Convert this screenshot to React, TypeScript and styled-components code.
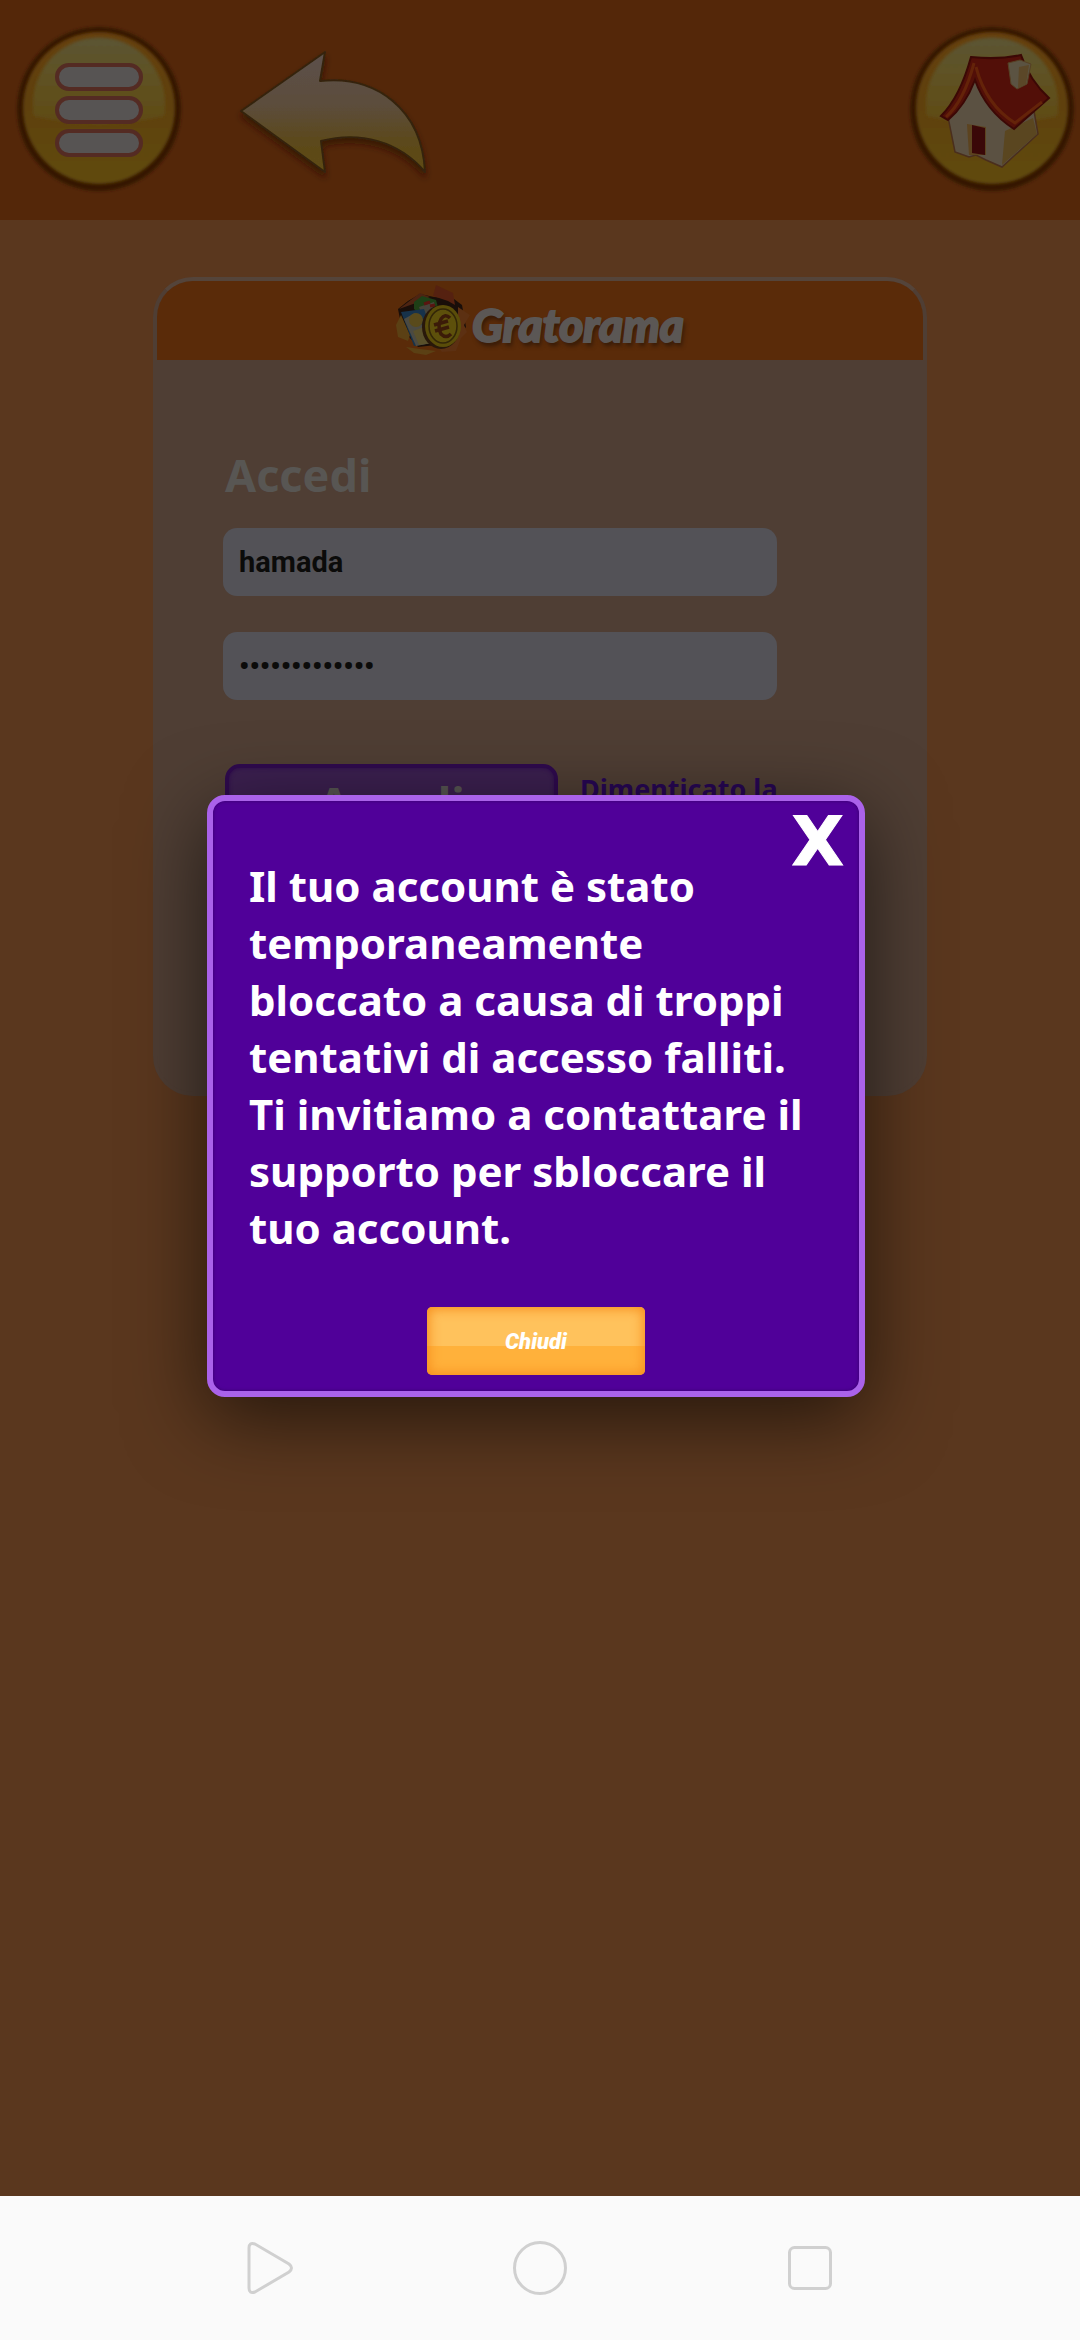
import React from "react";
import styled, { createGlobalStyle } from "styled-components";

const Global = createGlobalStyle`
  *, *::before, *::after { box-sizing: border-box; }
  body { margin: 0; background: #5a371e; font-family: "Noto Sans", "Open Sans", sans-serif; }
  button { border: 0; padding: 0; background: none; font: inherit; cursor: pointer; }
  svg { display: block; overflow: visible; }
`;

const Screen = styled.div`
  min-height: 100vh;
  display: flex;
  flex-direction: column;
`;

const Page = styled.div`
  position: relative;
  flex: 1;
`;

const TopBar = styled.header`
  height: 220px;
  padding: 0 6px 0 17px;
  display: flex;
  align-items: center;
  gap: 52px;
  background: #542709;
`;

const IconButton = styled.button<{ $end?: boolean }>`
  margin-left: ${(p) => (p.$end ? "auto" : "0")};
`;

const Card = styled.main`
  width: calc(100% - 306px);
  margin: 57px auto 0;
  height: 819px;
  border: 4px solid #54443a;
  border-color: #54443a #4f3e34 #4f3e34;
  border-radius: 40px;
  overflow: hidden;
  background: #4f3e34;
`;

const CardHead = styled.div`
  height: 79px;
  padding-top: 4px;
  display: flex;
  justify-content: center;
  background: #5a2b09;
`;

const Brand = styled.span`
  padding-top: 8px;
  font: italic 900 46px/64px "Lato", "Noto Sans", sans-serif;
  color: #5b5755;
  -webkit-text-stroke: 2px #5b5755;
  text-shadow: 2px 4px 4px #351a08;
`;

const Form = styled.form`
  padding: 83px 66px 0;
`;

const Title = styled.h1`
  margin: 0 0 21px;
  padding-left: 2px;
  font-size: 45px;
  line-height: 64px;
  color: #585653;
`;

const Field = styled.input`
  display: block;
  width: calc(100% - 80px);
  height: 68px;
  margin-bottom: 36px;
  padding: 0 16px;
  border: 0;
  border-radius: 14px;
  outline: 0;
  background: #535257;
  color: #0b0b0a;
  font: 700 29px "Roboto", sans-serif;
`;

const Actions = styled.div`
  display: flex;
  gap: 22px;
  padding: 28px 0 0 2px;
`;

const Submit = styled.button`
  flex: 0 0 333px;
  height: 78px;
  border: 4px solid #2f0a4e;
  border-radius: 15px;
  background: #3c2050;
  box-shadow: inset 0 0 4px #2f0a4e;
  color: #585653;
  font-weight: 700;
  font-size: 45px;
  line-height: 70px;
`;

const Forgot = styled.a`
  max-width: 240px;
  color: #270654;
  font-weight: 700;
  font-size: 27px;
  line-height: 36px;
  padding-top: 7px;
  text-decoration: none;
`;

const Overlay = styled.div`
  position: absolute;
  inset: 0;
  display: flex;
  align-items: center;
  justify-content: center;
  padding: 0 8px 4px 0;
`;

const Dialog = styled.section`
  width: 658px;
  max-width: 90%;
  padding: 26px 36px 16px;
  display: flex;
  flex-direction: column;
  border: 6px solid #aa62ea;
  border-radius: 18px;
  background: #500099;
  box-shadow: inset 0 0 3px 1px #41007d, 0 20px 80px rgba(0, 0, 0, 0.6);
`;

const Close = styled.button`
  align-self: flex-end;
  height: 30px;
  margin-right: -21px;
  color: #fff;
  font: 700 68px/30px "DejaVu Sans", sans-serif;
  -webkit-text-stroke: 1px #fff;
`;

const Message = styled.p`
  margin: 0 0 51px;
  color: #fff;
  font-weight: 700;
  font-size: 42px;
  line-height: 57px;
`;

const Confirm = styled.button`
  align-self: center;
  width: 218px;
  height: 68px;
  border-radius: 5px;
  background: linear-gradient(#ffc25c 0 57%, #ffb13b 57%);
  box-shadow: inset 0 0 12px 2px #f78f1e;
  color: #fff;
  font: italic 900 22px "Roboto", sans-serif;
`;

const SystemNav = styled.nav`
  height: 144px;
  padding: 0 12.5%;
  display: grid;
  grid-template-columns: repeat(3, 1fr);
  align-items: center;
  justify-items: center;
  background: #fafafa;
`;

const Disc = ({ id }: { id: string }) => (
  <>
    <defs>
      <linearGradient id={`${id}b`} x1="0" y1="0" x2="0" y2="1">
        <stop offset="0" stopColor="#664009" />
        <stop offset="0.5" stopColor="#5e410f" />
        <stop offset="1" stopColor="#604a0d" />
      </linearGradient>
      <linearGradient id={`${id}g`} x1="0" y1="0" x2="0" y2="1">
        <stop offset="0" stopColor="#5b5433" />
        <stop offset="0.6" stopColor="#5f501e" />
        <stop offset="1" stopColor="#5f4b14" />
      </linearGradient>
      <filter id={`${id}f`} x="-10%" y="-10%" width="120%" height="120%">
        <feGaussianBlur stdDeviation="1.5" />
      </filter>
    </defs>
    <circle cx="82" cy="84" r="82" fill="#351606" filter={`url(#${id}f)`} />
    <circle cx="82" cy="83" r="76" fill={`url(#${id}b)`} filter={`url(#${id}f)`} />
    <path d="M17 91 A66 67 0 1 1 147 91 Q82 106 17 91Z" fill={`url(#${id}g)`} filter={`url(#${id}f)`} />
  </>
);

const MenuIcon = () => (
  <svg width="168" height="170" viewBox="0 0 168 170" aria-hidden="true">
    <Disc id="m" />
    {[52, 85, 118].map((y) => (
      <rect key={y} x="40" y={y - 12} width="84" height="24" rx="12" fill="#575453" stroke="#542b23" strokeWidth="4" />
    ))}
  </svg>
);

const BackIcon = () => (
  <svg width="192" height="126" viewBox="0 0 192 126" aria-hidden="true">
    <defs>
      <linearGradient id="arrow" x1="0" y1="0" x2="0" y2="1">
        <stop offset="0" stopColor="#5b504b" />
        <stop offset="0.45" stopColor="#5b4d3b" />
        <stop offset="0.75" stopColor="#5c491b" />
        <stop offset="1" stopColor="#5e4b12" />
      </linearGradient>
      <filter id="soft" x="-10%" y="-10%" width="120%" height="130%">
        <feDropShadow dx="0" dy="5" stdDeviation="3" floodColor="#2e1504" floodOpacity="0.7" />
      </filter>
    </defs>
    <path
      d="M4 64 L88 5 L83 34 C139 28 185 62 188 125 C162 94 123 84 84 94 L88 125Z"
      fill="url(#arrow)"
      stroke="#35240b"
      strokeWidth="2"
      strokeLinejoin="round"
      filter="url(#soft)"
    />
  </svg>
);

const HomeIcon = () => (
  <svg width="164" height="170" viewBox="0 0 164 170" aria-hidden="true">
    <Disc id="h" />
    <path d="M38 92 L64 53 L100 100 L124 86 L128 109 L92 142 L76 135 L66 130 L59 132 L45 127Z" fill="#5b5142" stroke="#4a2e1d" strokeWidth="1.5" />
    <path d="M95 106 L123 93 L127 109 L92 140Z" fill="#5a4620" />
    <path d="M57 99 L76 102 L76 130 L59 130Z" fill="#5c431f" />
    <path d="M62 100 L75 103 L75 130 L62 128Z" fill="#3a0808" />
    <path d="M61 32 Q88 35 111 30 Q120 56 139 73 L104 104 Q76 86 65 55 Q55 81 38 95 L31 91 Q50 72 61 32Z" fill="#520f08" stroke="#3b0805" strokeWidth="2" />
    <path d="M64 38 Q54 76 36 92 M66 42 Q76 80 105 98 L132 77" fill="none" stroke="#642309" strokeWidth="3" />
    <path d="M98 38 L110 35 L121 39 L117 59 L107 64 L101 59Z" fill="#5b5342" stroke="#564023" strokeWidth="1" />
    <path d="M109 42 L119 40 L116 59 L108 63Z" fill="#5b4728" />
  </svg>
);

const CoinLogo = () => (
  <svg width="76" height="70" viewBox="0 0 76 70" aria-hidden="true">
    <path d="M2 24 L12 16 L24 9 L38 12 L58 14 L66 20 L70 42 L58 58 L22 62 L6 44Z" fill="#190e09" />
    <path d="M3 24 L24 8 L34 12 L20 18Z" fill="#4d2412" />
    <path d="M37 11 L40 0 L57 8 L59 20 L52 16Z" fill="#552110" />
    <path d="M62 22 L74 30 L68 40 L71 47 L65 53 L60 66 L46 67 L40 60 L62 52Z" fill="#5c3012" />
    <path d="M5 30 L0 40 L2 52 L12 56 L14 50Z" fill="#5b4014" />
    <path d="M10 62 L24 64 L40 66 L30 70 L18 68Z" fill="#5b4014" />
    <path d="M18 24 L18 17 L26 11 L40 15 L42 22 L30 34Z" fill="#1e3f16" />
    <path d="M23 22 L38 17 L40 26 L26 30Z" fill="#46433a" />
    <path d="M28 19 L34 17 M34 21 L39 20" stroke="#5a1510" strokeWidth="3" />
    <path d="M5 27 L28 24 L40 57 L18 61Z" fill="#17324a" />
    <path d="M8 34 L19 28 L36 58 L20 61Z" fill="#4b4a42" />
    <circle cx="20" cy="35" r="7" fill="#594a1b" />
    <path d="M17 46 L28 42 L37 58 L23 60Z" fill="#59502b" />
    <ellipse cx="45" cy="42" rx="19" ry="22" fill="#29180a" />
    <ellipse cx="47" cy="41" rx="18" ry="21" fill="#5a4d09" />
    <ellipse cx="47" cy="41" rx="14" ry="17" fill="#5d500b" stroke="#332608" strokeWidth="1.5" />
    <path d="M54 33 Q49 28 45 34 Q41 41 45 49 Q50 54 55 49 M38 40 L52 36 M39 46 L53 42" fill="none" stroke="#3b1b08" strokeWidth="3.5" />
  </svg>
);

const navIcon = { fill: "none", stroke: "#d0d0d0", strokeWidth: 3 };

export default function App() {
  return (
    <Screen>
      <Global />
      <Page>
        <TopBar>
          <IconButton aria-label="Menu"><MenuIcon /></IconButton>
          <IconButton aria-label="Indietro"><BackIcon /></IconButton>
          <IconButton aria-label="Home" $end><HomeIcon /></IconButton>
        </TopBar>
        <Card>
          <CardHead>
            <CoinLogo />
            <Brand>Gratorama</Brand>
          </CardHead>
          <Form onSubmit={(e) => e.preventDefault()}>
            <Title>Accedi</Title>
            <Field aria-label="Nome utente" defaultValue="hamada" />
            <Field aria-label="Password" type="password" defaultValue="gratorama1234" />
            <Actions>
              <Submit type="submit">Accedi</Submit>
              <Forgot href="#password">Dimenticato la password?</Forgot>
            </Actions>
          </Form>
        </Card>
        <Overlay>
          <Dialog role="dialog" aria-modal="true" aria-labelledby="message">
            <Close aria-label="Chiudi finestra">X</Close>
            <Message id="message">
              Il tuo account è stato temporaneamente bloccato a causa di troppi tentativi di accesso falliti. Ti
              invitiamo a contattare il supporto per sbloccare il tuo account.
            </Message>
            <Confirm>Chiudi</Confirm>
          </Dialog>
        </Overlay>
      </Page>
      <SystemNav aria-label="Sistema">
        <IconButton aria-label="Indietro">
          <svg width="48" height="54" viewBox="0 0 48 54" {...navIcon} aria-hidden="true">
            <path d="M3 7 Q3 1 9 3 L43 23 Q48 27 43 31 L9 51 Q3 53 3 47Z" />
          </svg>
        </IconButton>
        <IconButton aria-label="Schermata principale">
          <svg width="54" height="54" viewBox="0 0 54 54" {...navIcon} aria-hidden="true">
            <circle cx="27" cy="27" r="25.5" />
          </svg>
        </IconButton>
        <IconButton aria-label="App recenti">
          <svg width="44" height="44" viewBox="0 0 44 44" {...navIcon} aria-hidden="true">
            <rect x="1.5" y="1.5" width="41" height="41" rx="5" />
          </svg>
        </IconButton>
      </SystemNav>
    </Screen>
  );
}
